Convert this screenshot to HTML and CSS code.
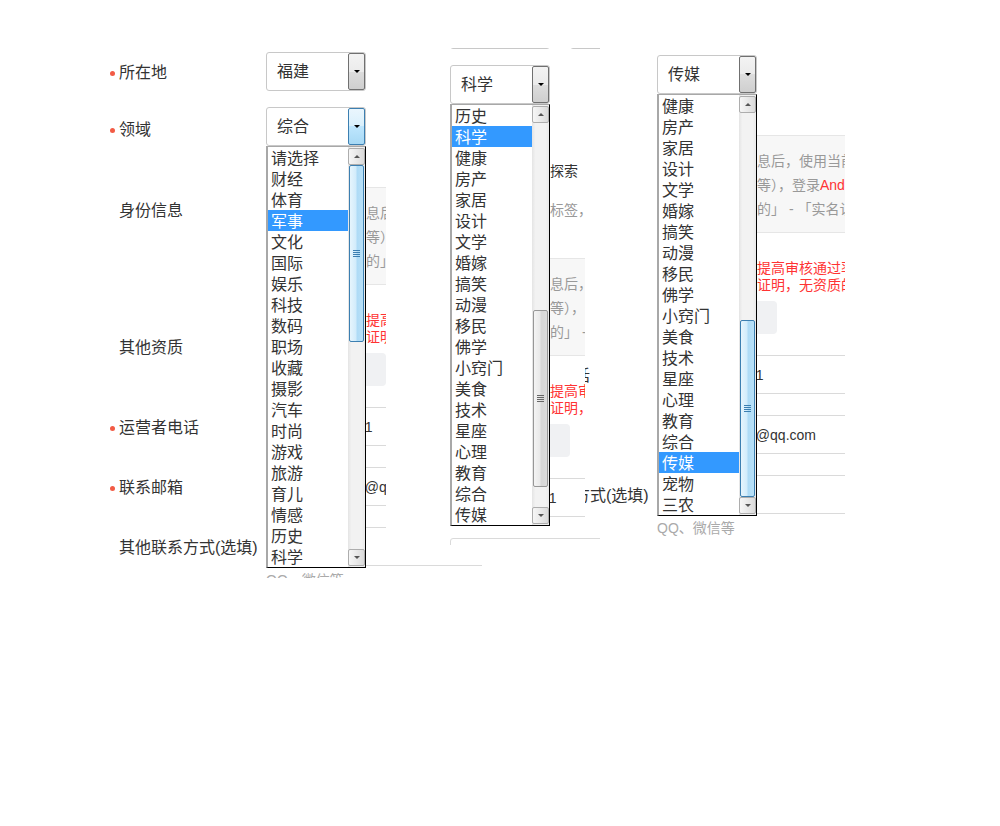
FILE: index.html
```html
<!DOCTYPE html>
<html lang="zh-CN">
<head>
<meta charset="utf-8">
<title>运营者信息</title>
<link rel="stylesheet" href="styles.css">
</head>
<body>
<main class="canvas">

  <!-- Left window -->
  <section class="panel panel-left">
    <div class="form">
      <div class="row row-loc">
        <div class="label req">所在地</div>
        <div class="field field-pair">
          <div class="select"><span class="select-value">福建</span><span class="select-btn"></span></div>
          <div class="select"><span class="select-value">福州</span><span class="select-btn"></span></div>
        </div>
      </div>
      <div class="row row-domain">
        <div class="label req">领域</div>
        <div class="field">
          <div class="select-wrap">
            <div class="select is-focused"><span class="select-value">综合</span><span class="select-btn"></span></div>
            <div class="listbox">
              <ul class="options">
                <li>请选择</li><li>财经</li><li>体育</li><li class="sel">军事</li><li>文化</li>
                <li>国际</li><li>娱乐</li><li>科技</li><li>数码</li><li>职场</li>
                <li>收藏</li><li>摄影</li><li>汽车</li><li>时尚</li><li>游戏</li>
                <li>旅游</li><li>育儿</li><li>情感</li><li>历史</li><li>科学</li>
              </ul>
              <div class="scrollbar">
                <span class="sb-btn sb-up"></span>
                <div class="sb-track"><span class="sb-thumb is-hover" style="margin-top:0px"></span></div>
                <span class="sb-btn sb-down"></span>
              </div>
            </div>
          </div>
        </div>
      </div>
      <div class="row row-id">
        <div class="label">身份信息</div>
        <div class="field">
          <div class="notice">
            <p>提交运营者信息后，使用当前运营者微信扫码验证身份</p>
            <p>证件（如护照等），登录<span class="red">Android</span>或iOS版微信</p>
            <p>可在微信「我的」 - 「实名认证」中完成验证</p>
          </div>
        </div>
      </div>
      <div class="row row-qual">
        <div class="label">其他资质</div>
        <div class="field">
          <p class="warn">上传相关资质可提高审核通过率，建议上传</p>
          <p class="warn">请上传行业资质证明，无资质的可不上传</p>
          <button class="btn-upload" type="button">上传资质</button>
        </div>
      </div>
      <div class="row row-input">
        <div class="label req">运营者电话</div>
        <div class="field"><input class="input" type="text" value="13800138001" readonly></div>
      </div>
      <div class="row row-input">
        <div class="label req">联系邮箱</div>
        <div class="field"><input class="input" type="text" value="1234567890@qq.com" readonly></div>
      </div>
      <div class="row row-input">
        <div class="label">其他联系方式(选填)</div>
        <div class="field">
          <input class="input" type="text" value="" readonly>
          <p class="hint">QQ、微信等</p>
        </div>
      </div>
    </div>
  </section>

  <!-- Middle window -->
  <section class="panel panel-mid">
    <div class="form">
      <div class="row row-loc">
        <div class="label req">所在地</div>
        <div class="field field-pair">
          <div class="select"><span class="select-value">北京</span><span class="select-btn"></span></div>
          <div class="select"><span class="select-value">北京</span><span class="select-btn"></span></div>
        </div>
      </div>
      <div class="row row-domain">
        <div class="label req">领域</div>
        <div class="field">
          <div class="select-wrap">
            <div class="select"><span class="select-value">科学</span><span class="select-btn"></span></div>
            <div class="listbox">
              <ul class="options">
                <li>历史</li><li class="sel">科学</li><li>健康</li><li>房产</li><li>家居</li>
                <li>设计</li><li>文学</li><li>婚嫁</li><li>搞笑</li><li>动漫</li>
                <li>移民</li><li>佛学</li><li>小窍门</li><li>美食</li><li>技术</li>
                <li>星座</li><li>心理</li><li>教育</li><li>综合</li><li>传媒</li>
              </ul>
              <div class="scrollbar">
                <span class="sb-btn sb-up"></span>
                <div class="sb-track"><span class="sb-thumb" style="margin-top:187px"></span></div>
                <span class="sb-btn sb-down"></span>
              </div>
            </div>
          </div>
        </div>
      </div>
      <div class="row row-tip">
        <div class="label"></div>
        <div class="field">
          <p class="tip-main">前沿科技、宇宙探索</p>
          <p class="tip-sub">准确填写内容的标签，便于推荐</p>
        </div>
      </div>
      <div class="row row-id">
        <div class="label">身份信息</div>
        <div class="field">
          <div class="notice">
            <p>提交运营者信息后，使用当前运营者微信扫码验证身份</p>
            <p>证件（如护照等），登录<span class="red">Android</span>或iOS版微信</p>
            <p>可在微信「我的」 - 「实名认证」中完成验证</p>
          </div>
        </div>
      </div>
      <div class="row row-qual">
        <div class="label">其他资质</div>
        <div class="field">
          <p class="warn">上传相关资质可提高审核通过率，建议上传</p>
          <p class="warn">请上传行业资质证明，无资质的可不上传</p>
          <button class="btn-upload" type="button">上传资质</button>
        </div>
      </div>
      <div class="row row-input">
        <div class="label req">运营者电话</div>
        <div class="field"><input class="input" type="text" value="13800138001" readonly></div>
      </div>
      <div class="row row-input">
        <div class="label req">联系邮箱</div>
        <div class="field"><input class="input" type="text" value="1234567890@qq.com" readonly></div>
      </div>
    </div>
  </section>

  <!-- Right window -->
  <section class="panel panel-right">
    <div class="form">
      <div class="row row-loc">
        <div class="label req">所在地</div>
        <div class="field field-pair">
          <div class="select"><span class="select-value">福建</span><span class="select-btn"></span></div>
          <div class="select"><span class="select-value">福州</span><span class="select-btn"></span></div>
        </div>
      </div>
      <div class="row row-domain">
        <div class="label req">领域</div>
        <div class="field">
          <div class="select-wrap">
            <div class="select"><span class="select-value">传媒</span><span class="select-btn"></span></div>
            <div class="listbox">
              <ul class="options">
                <li>健康</li><li>房产</li><li>家居</li><li>设计</li><li>文学</li>
                <li>婚嫁</li><li>搞笑</li><li>动漫</li><li>移民</li><li>佛学</li>
                <li>小窍门</li><li>美食</li><li>技术</li><li>星座</li><li>心理</li>
                <li>教育</li><li>综合</li><li class="sel">传媒</li><li>宠物</li><li>三农</li>
              </ul>
              <div class="scrollbar">
                <span class="sb-btn sb-up"></span>
                <div class="sb-track"><span class="sb-thumb is-hover" style="margin-top:207px"></span></div>
                <span class="sb-btn sb-down"></span>
              </div>
            </div>
          </div>
        </div>
      </div>
      <div class="row row-id">
        <div class="label">身份信息</div>
        <div class="field">
          <div class="notice">
            <p>提交运营者信息后，使用当前运营者微信扫码验证身份</p>
            <p>证件（如护照等），登录<span class="red">Android</span>或iOS版微信</p>
            <p>可在微信「我的」 - 「实名认证」中完成验证</p>
          </div>
        </div>
      </div>
      <div class="row row-qual">
        <div class="label">其他资质</div>
        <div class="field">
          <p class="warn">上传相关资质可提高审核通过率，建议上传</p>
          <p class="warn">请上传行业资质证明，无资质的可不上传</p>
          <button class="btn-upload" type="button">上传资质</button>
        </div>
      </div>
      <div class="row row-input">
        <div class="label req">运营者电话</div>
        <div class="field"><input class="input" type="text" value="13800138001" readonly></div>
      </div>
      <div class="row row-input">
        <div class="label req">联系邮箱</div>
        <div class="field"><input class="input" type="text" value="1234567890@qq.com" readonly></div>
      </div>
      <div class="row row-input">
        <div class="label">其他联系方式(选填)</div>
        <div class="field">
          <input class="input" type="text" value="" readonly>
          <p class="hint">QQ、微信等</p>
        </div>
      </div>
    </div>
  </section>

</main>
</body>
</html>
```

FILE: styles.css
```css
html, body {
  margin: 0;
  padding: 0;
  background: #fff;
}

body {
  font-family: "Liberation Sans", "Noto Sans CJK SC", sans-serif;
  color: #333;
}

p {
  margin: 0;
}

.canvas {
  position: relative;
  width: 1000px;
  height: 826px;
  overflow: hidden;
}

/* clipped windows placed on the canvas */
.panel {
  position: absolute;
  overflow: hidden;
  background: #fff;
}

.panel-left {
  left: 0;
  top: 0;
  width: 482px;
  height: 578px;
  z-index: 1;
}

.panel-mid {
  left: 386px;
  top: 48px;
  width: 214px;
  height: 497px;
  z-index: 2;
}

.panel-right {
  left: 585px;
  top: 50px;
  width: 260px;
  height: 486px;
  z-index: 3;
}

/* form layout */
.form {
  width: 760px;
  padding-top: 52px;
}

.panel-mid .form {
  margin-left: -202px;
  margin-top: -90px;
}

.panel-right .form {
  margin-left: -194px;
  margin-top: -102px;
}

.row {
  display: grid;
  grid-template-columns: 266px 1fr;
}

.label {
  height: 39px;
  padding-left: 119px;
  font-size: 16px;
  line-height: 41px;
  color: #333;
  white-space: nowrap;
}

.label.req::before {
  content: "";
  display: inline-block;
  width: 5px;
  height: 5px;
  border-radius: 50%;
  background: #f25b45;
  margin-left: -9px;
  margin-right: 4px;
  vertical-align: middle;
}

.row-domain {
  margin-top: 16px;
}

.row-domain .label {
  line-height: 45px;
}

.field-pair {
  display: flex;
  gap: 20px;
}

/* select */
.select-wrap {
  position: relative;
  width: 100px;
}

.select {
  display: flex;
  align-items: stretch;
  width: 100px;
  height: 39px;
  box-sizing: border-box;
  border: 1px solid #c8c8c8;
  border-radius: 3px;
  background: #fff;
}

.select-value {
  flex: 1;
  padding-left: 10px;
  font-size: 16px;
  line-height: 38px;
  color: #333;
  white-space: nowrap;
}

.select-btn {
  width: 17px;
  box-sizing: border-box;
  border: 1px solid #707070;
  border-radius: 2px;
  background: linear-gradient(#f3f3f3, #ebebeb 50%, #dddddd 50%, #cfcfcf);
  display: flex;
  align-items: center;
  justify-content: center;
}

.select-btn::after {
  content: "";
  border-left: 3px solid transparent;
  border-right: 3px solid transparent;
  border-top: 3px solid #000;
}

.select.is-focused .select-btn {
  border-color: #3c7fb1;
  background: linear-gradient(#eaf6fd, #d9f0fc 50%, #bee6fd 50%, #a7d9f5);
}

/* open list */
.listbox {
  position: absolute;
  top: 100%;
  left: 0;
  z-index: 5;
  display: flex;
  width: 100px;
  height: 422px;
  box-sizing: border-box;
  border-left: 2px solid #a8a8a8;
  border-top: 1px solid #a8a8a8;
  border-right: 1px solid #000;
  border-bottom: 1px solid #000;
  background: #fff;
}

.options {
  width: 80px;
  margin: 0;
  padding: 0;
  list-style: none;
}

.options li {
  height: 21px;
  line-height: 24px;
  padding-left: 3px;
  font-size: 16px;
  color: #333;
  white-space: nowrap;
  overflow: hidden;
}

.options li.sel {
  background: #3399ff;
  color: #fff;
}

.scrollbar {
  width: 17px;
  box-sizing: border-box;
  padding: 1px 0;
  display: flex;
  flex-direction: column;
  background: linear-gradient(90deg, #e4e4e4, #f2f2f2 20%, #f2f2f2 80%, #e9e9e9);
}

.sb-btn {
  height: 17px;
  box-sizing: border-box;
  border: 1px solid #adadad;
  border-radius: 2px;
  background: linear-gradient(90deg, #f6f6f6, #e9e9e9 50%, #dadada);
  display: flex;
  align-items: center;
  justify-content: center;
}

.sb-up::after {
  content: "";
  border-left: 3px solid transparent;
  border-right: 3px solid transparent;
  border-bottom: 3px solid #555;
}

.sb-down::after {
  content: "";
  border-left: 3px solid transparent;
  border-right: 3px solid transparent;
  border-top: 3px solid #555;
}

.sb-track {
  flex: 1;
  display: flex;
  flex-direction: column;
}

.sb-thumb {
  height: 177px;
  margin-left: 1px;
  margin-right: 1px;
  box-sizing: border-box;
  border: 1px solid #979797;
  border-radius: 2px;
  background: linear-gradient(90deg, #f4f4f4, #e9e9e9 45%, #d7d7d7 55%, #dcdcdc);
  display: flex;
  align-items: center;
  justify-content: center;
}

.sb-thumb::after {
  content: "";
  width: 7px;
  height: 7px;
  background: repeating-linear-gradient(#666 0 1px, transparent 1px 2px);
}

.sb-thumb.is-hover {
  border-color: #3c7fb1;
  background: linear-gradient(90deg, #e6f5fd, #d2ecfb 45%, #aedbf6 55%, #b9e1f8);
}

.sb-thumb.is-hover::after {
  background: repeating-linear-gradient(#3c7fb1 0 1px, transparent 1px 2px);
}

/* domain tip (middle window) */
.row-tip {
  margin-top: 56px;
  margin-bottom: -4px;
}

.row-tip .label {
  height: auto;
}

.row-tip .field {
  padding-left: 2px;
}

.tip-main,
.tip-sub {
  font-size: 14px;
  line-height: 22px;
  white-space: nowrap;
}

.tip-main {
  color: #333;
}

.tip-sub {
  margin-top: 17px;
  color: #999;
}

/* identity notice */
.row-id {
  margin-top: 41px;
}

.row-id .label,
.row-qual .label {
  height: auto;
  line-height: 20px;
}

.row-id .label {
  padding-top: 14px;
}

.notice {
  width: 480px;
  box-sizing: border-box;
  padding: 13px 16px 11px;
  border-top: 1px solid #e6e6e6;
  border-bottom: 1px solid #e6e6e6;
  background: #f7f7f7;
  color: #999;
  font-size: 14px;
  line-height: 24px;
  white-space: nowrap;
}

.red {
  color: #ff3333;
}

/* qualification */
.row-qual {
  margin-top: 27px;
}

.row-qual .label {
  padding-top: 26px;
}

.warn {
  padding-left: 2px;
  font-size: 14px;
  line-height: 17px;
  color: #ff3333;
  white-space: nowrap;
}

.btn-upload {
  display: block;
  width: 120px;
  height: 33px;
  margin-top: 7px;
  border: 0;
  border-radius: 4px;
  background: #f0f1f3;
  color: #666;
  font-family: inherit;
  font-size: 14px;
}

/* text inputs */
.row-input {
  margin-top: 21px;
}

.input {
  display: block;
  width: 400px;
  height: 39px;
  box-sizing: border-box;
  margin: 0;
  padding: 0 0 0 20px;
  border: 1px solid #dadada;
  border-radius: 3px;
  background: #fff;
  color: #333;
  font-family: "Liberation Sans", "Noto Sans CJK SC", sans-serif;
  font-size: 14px;
  outline: none;
}

.hint {
  margin-top: 5px;
  font-size: 14px;
  line-height: 18px;
  color: #aaa;
  white-space: nowrap;
}
```
